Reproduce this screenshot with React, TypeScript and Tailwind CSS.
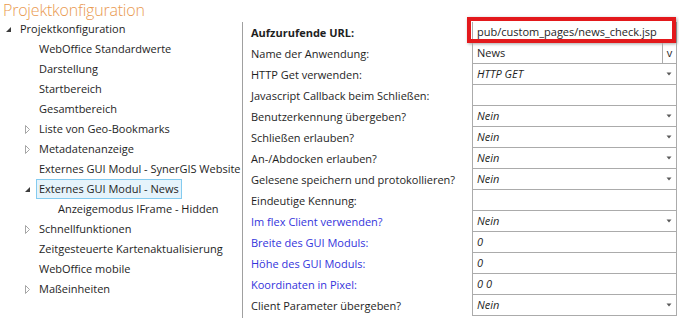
import React from "react";

type TreeItem = {
  label: string;
  level: number;
  expander?: "open" | "closed";
  selected?: boolean;
};

const tree: TreeItem[] = [
  { label: "Projektkonfiguration", level: 0, expander: "open" },
  { label: "WebOffice Standardwerte", level: 1 },
  { label: "Darstellung", level: 1 },
  { label: "Startbereich", level: 1 },
  { label: "Gesamtbereich", level: 1 },
  { label: "Liste von Geo-Bookmarks", level: 1, expander: "closed" },
  { label: "Metadatenanzeige", level: 1, expander: "closed" },
  { label: "Externes GUI Modul - SynerGIS Website", level: 1 },
  { label: "Externes GUI Modul - News", level: 1, expander: "open", selected: true },
  { label: "Anzeigemodus IFrame - Hidden", level: 2 },
  { label: "Schnellfunktionen", level: 1, expander: "closed" },
  { label: "Zeitgesteuerte Kartenaktualisierung", level: 1 },
  { label: "WebOffice mobile", level: 1 },
  { label: "Maßeinheiten", level: 1, expander: "closed" },
];

type Row = {
  label: string;
  value?: string;
  bold?: boolean;
  blue?: boolean;
  kind?: "text" | "combo" | "button" | "url";
  italic?: boolean;
};

const rows: Row[] = [
  { label: "Aufzurufende URL:", bold: true, value: "pub/custom_pages/news_check.jsp", kind: "url" },
  { label: "Name der Anwendung:", value: "News", kind: "button" },
  { label: "HTTP Get verwenden:", value: "HTTP GET", kind: "combo", italic: true },
  { label: "Javascript Callback beim Schließen:", value: "" },
  { label: "Benutzerkennung übergeben?", value: "Nein", kind: "combo", italic: true },
  { label: "Schließen erlauben?", value: "Nein", kind: "combo", italic: true },
  { label: "An-/Abdocken erlauben?", value: "Nein", kind: "combo", italic: true },
  { label: "Gelesene speichern und protokollieren?", value: "Nein", kind: "combo", italic: true },
  { label: "Eindeutige Kennung:", value: "" },
  { label: "Im flex Client verwenden?", blue: true, value: "Nein", kind: "combo", italic: true },
  { label: "Breite des GUI Moduls:", blue: true, value: "0", italic: true },
  { label: "Höhe des GUI Moduls:", blue: true, value: "0", italic: true },
  { label: "Koordinaten in Pixel:", blue: true, value: "0 0", italic: true },
  { label: "Client Parameter übergeben?", value: "Nein", kind: "combo", italic: true },
];

const Expander = ({ kind }: { kind: "open" | "closed" }) =>
  kind === "open" ? (
    <svg width="7" height="7" viewBox="0 0 7 7">
      <path d="M6 1V6H1Z" fill="#3c3c3c" />
    </svg>
  ) : (
    <svg width="7" height="9" viewBox="0 0 7 9">
      <path d="M1.5 0.5L5.5 4.5L1.5 8.5Z" fill="none" stroke="#a6a6a6" />
    </svg>
  );

const ComboArrow = () => (
  <svg width="6" height="4" viewBox="0 0 6 4" className="shrink-0">
    <path d="M0.5 0.5H5.5L3 3.5Z" fill="#5a5a5a" />
  </svg>
);

export default function App() {
  return (
    <div
      className="w-[679px] h-[318px] bg-white overflow-hidden text-[11px] text-[#1e1e1e]"
      style={{ fontFamily: '"Open Sans", "Noto Sans", sans-serif' }}
    >
      <div className="h-[19px] pl-[3px] text-[16px] leading-[20px] font-light tracking-[-0.2px] text-[#e9994f]">
        Projektkonfiguration
      </div>

      <div className="flex">
        {/* Tree */}
        <div className="w-[242px] shrink-0">
          {tree.map((item) => (
            <div
              key={item.label}
              className="h-[20px] flex items-center"
              style={{ paddingLeft: item.level * 19 }}
            >
              <div className="w-[20px] pl-[5px] flex items-center shrink-0">
                {item.expander && <Expander kind={item.expander} />}
              </div>
              <span
                className={
                  item.selected
                    ? "h-[20px] leading-[18px] px-[2px] -ml-[3px] border border-[#84cbef] bg-[#e5f3fb] whitespace-nowrap"
                    : "whitespace-nowrap"
                }
              >
                {item.label}
              </span>
            </div>
          ))}
        </div>

        {/* Properties */}
        <div className="mt-[3px] border-l border-[#a0a0a0] flex-1 h-[296px]">
          {rows.map((row, i) => (
            <div key={row.label} className="h-[21px] flex">
              <div
                className={
                  "w-[229px] pl-[8px] leading-[21px] whitespace-nowrap " +
                  (row.bold ? "font-bold " : "") +
                  (row.blue ? "text-[#3434dc]" : "")
                }
              >
                {row.label}
              </div>
              <div
                className={
                  "relative w-[205px] border-l border-r border-[#ababab] flex items-center " +
                  (i === 0 ? "" : "border-b")
                }
              >
                {row.kind === "url" && (
                  <div className="absolute -left-[6px] -top-[5px] w-[209px] h-[26px] border-[4px] border-[#e3191c] shadow-[1px_1px_3px_rgba(0,0,0,0.35)]" />
                )}
                <span
                  className={
                    "flex-1 pl-[4px] whitespace-nowrap " + (row.italic ? "italic" : "")
                  }
                >
                  {row.value}
                </span>
                {row.kind === "combo" && (
                  <div className="w-[14px] flex justify-center">
                    <ComboArrow />
                  </div>
                )}
                {row.kind === "button" && (
                  <div className="w-[14px] h-full border-l border-[#ababab] text-center leading-[19px]">
                    v
                  </div>
                )}
              </div>
            </div>
          ))}
        </div>
      </div>
    </div>
  );
}
